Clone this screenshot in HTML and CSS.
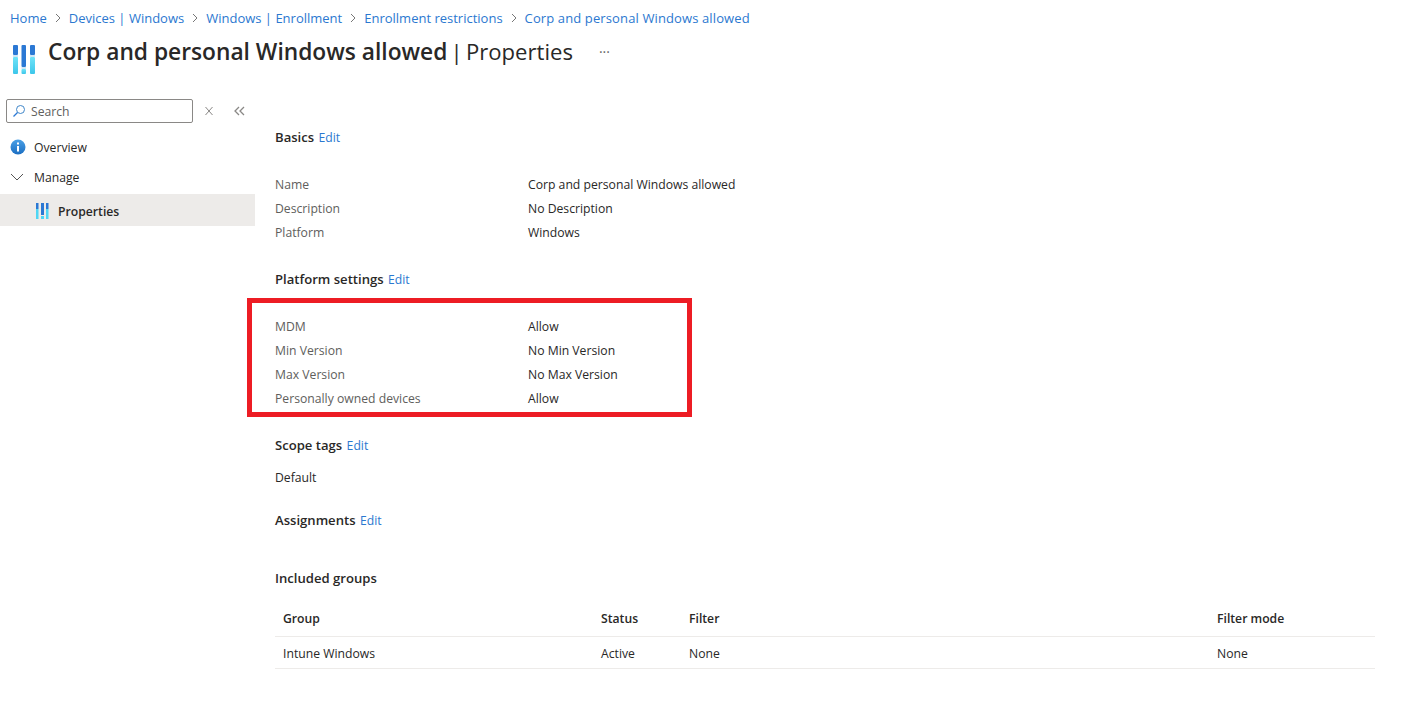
FILE: index.html
```html
<!DOCTYPE html>
<html lang="en">
<head>
    <meta charset="UTF-8">
    <meta name="viewport" content="width=device-width, initial-scale=1.0">
    <title>Corp and personal Windows allowed | Properties</title>
    <link rel="stylesheet" href="styles.css">
</head>
<body>
    <nav class="breadcrumb">
        <a href="#">Home</a>
        <svg class="crumb-sep" width="8" height="10" viewBox="0 0 8 10"><path d="M2 1l4 4-4 4" fill="none" stroke="#777" stroke-width="1"/></svg>
        <a href="#">Devices | Windows</a>
        <svg class="crumb-sep" width="8" height="10" viewBox="0 0 8 10"><path d="M2 1l4 4-4 4" fill="none" stroke="#777" stroke-width="1"/></svg>
        <a href="#">Windows | Enrollment</a>
        <svg class="crumb-sep" width="8" height="10" viewBox="0 0 8 10"><path d="M2 1l4 4-4 4" fill="none" stroke="#777" stroke-width="1"/></svg>
        <a href="#">Enrollment restrictions</a>
        <svg class="crumb-sep" width="8" height="10" viewBox="0 0 8 10"><path d="M2 1l4 4-4 4" fill="none" stroke="#777" stroke-width="1"/></svg>
        <a href="#" class="crumb-current">Corp and personal Windows allowed</a>
    </nav>

    <header class="page-title">
        <svg class="title-icon" width="22" height="29" viewBox="0 0 22 29">
            <defs>
                <linearGradient id="barLight" x1="0" y1="0" x2="0" y2="1">
                    <stop offset="0" stop-color="#6fe3f8"/>
                    <stop offset="1" stop-color="#3cc6ea"/>
                </linearGradient>
            </defs>
            <rect x="0" y="0" width="5" height="10" rx="1" fill="#2b78d4"/>
            <rect x="0" y="10" width="5" height="2" fill="#cfe6f5"/>
            <rect x="0" y="12" width="5" height="17" rx="1" fill="url(#barLight)"/>
            <rect x="8.5" y="0" width="4.5" height="22" rx="1" fill="#2b78d4"/>
            <rect x="8.5" y="22" width="4.5" height="2" fill="#cfe6f5"/>
            <rect x="8.5" y="24" width="4.5" height="5" rx="1" fill="url(#barLight)"/>
            <rect x="17" y="0" width="5" height="10" rx="1" fill="#2b78d4"/>
            <rect x="17" y="10" width="5" height="2" fill="#cfe6f5"/>
            <rect x="17" y="12" width="5" height="17" rx="1" fill="url(#barLight)"/>
        </svg>
        <h1><strong>Corp and personal Windows allowed</strong> | Properties</h1>
        <span class="title-more">···</span>
    </header>

    <div class="layout">
        <aside class="sidebar">
            <div class="search-row">
                <div class="search-box">
                    <svg width="14" height="14" viewBox="0 0 14 14"><circle cx="8.5" cy="5.5" r="4" fill="none" stroke="#3f86c9" stroke-width="1"/><path d="M5.5 8.5L1.5 12.5" stroke="#2b78d4" stroke-width="1.2"/></svg>
                    <span>Search</span>
                </div>
                <svg class="search-clear" width="10" height="10" viewBox="0 0 10 10"><path d="M1.5 1l3.5 4-3.5 4M8.5 1L5 5l3.5 4" fill="none" stroke="#8a8886" stroke-width="1"/></svg>
                <svg class="search-collapse" width="11" height="10" viewBox="0 0 11 10"><path d="M5 1L1 5l4 4M10 1L6 5l4 4" fill="none" stroke="#8a8886" stroke-width="1.3"/></svg>
            </div>
            <div class="menu-item overview">
                <svg width="16" height="16" viewBox="0 0 16 16">
                    <defs>
                        <linearGradient id="infoFill" x1="0" y1="0" x2="0" y2="1">
                            <stop offset="0" stop-color="#4aa0e6"/>
                            <stop offset="1" stop-color="#1b6ec2"/>
                        </linearGradient>
                    </defs>
                    <circle cx="8" cy="8" r="7.5" fill="url(#infoFill)"/>
                    <rect x="7" y="7" width="2" height="5.5" fill="#fff"/>
                    <rect x="7" y="3.5" width="2" height="2" fill="#fff"/>
                </svg>
                <span>Overview</span>
            </div>
            <div class="menu-item manage">
                <svg width="14" height="8" viewBox="0 0 14 8"><path d="M1 1l6 6 6-6" fill="none" stroke="#555" stroke-width="1"/></svg>
                <span>Manage</span>
            </div>
            <div class="menu-item properties">
                <svg width="13" height="16" viewBox="0 0 13 16">
                    <rect x="0" y="0" width="2.5" height="6" fill="#2b78d4"/>
                    <rect x="0" y="6" width="2.5" height="10" fill="#4fd6f4"/>
                    <rect x="5" y="0" width="3" height="12" fill="#2b78d4"/>
                    <rect x="5" y="13" width="3" height="3" fill="#4fd6f4"/>
                    <rect x="10" y="0" width="2.5" height="6" fill="#2b78d4"/>
                    <rect x="10" y="6" width="2.5" height="10" fill="#4fd6f4"/>
                </svg>
                <span>Properties</span>
            </div>
        </aside>

        <main class="content">
            <h2 class="section-head basics">Basics <a href="#">Edit</a></h2>
            <dl class="props">
                <div><dt>Name</dt><dd>Corp and personal Windows allowed</dd></div>
                <div><dt>Description</dt><dd>No Description</dd></div>
                <div><dt>Platform</dt><dd>Windows</dd></div>
            </dl>

            <h2 class="section-head">Platform settings <a href="#">Edit</a></h2>
            <dl class="props highlighted">
                <div><dt>MDM</dt><dd>Allow</dd></div>
                <div><dt>Min Version</dt><dd>No Min Version</dd></div>
                <div><dt>Max Version</dt><dd>No Max Version</dd></div>
                <div><dt>Personally owned devices</dt><dd>Allow</dd></div>
            </dl>

            <h2 class="section-head">Scope tags <a href="#">Edit</a></h2>
            <p class="tag-value">Default</p>

            <h2 class="section-head">Assignments <a href="#">Edit</a></h2>

            <h2 class="section-head included">Included groups</h2>
            <table class="groups">
                <tr>
                    <th class="col-group">Group</th>
                    <th class="col-status">Status</th>
                    <th class="col-filter">Filter</th>
                    <th>Filter mode</th>
                </tr>
                <tr>
                    <td>Intune Windows</td>
                    <td>Active</td>
                    <td>None</td>
                    <td>None</td>
                </tr>
            </table>
        </main>
    </div>
</body>
</html>
```

FILE: styles.css
```css
body {
    margin: 0;
    font-family: "Open Sans", "Noto Sans", sans-serif;
    font-size: 12.2px;
    color: #292827;
    background-color: #fff;
}
a {
    color: #2b78d0;
    text-decoration: none;
}
.breadcrumb {
    display: flex;
    align-items: center;
    gap: 7px;
    height: 18px;
    padding: 9px 0 0 10px;
    font-size: 13px;
}
.crumb-current {
    letter-spacing: 0.12px;
}
.page-title {
    display: flex;
    align-items: center;
    height: 46px;
    padding-left: 13px;
}
.title-icon {
    margin-top: 19px;
}
.page-title h1 {
    margin: 2px 0 0 13px;
    font-size: 22.1px;
    font-weight: 400;
    word-spacing: -2.5px;
}
.page-title strong {
    font-size: 22.75px;
    font-weight: 600;
    word-spacing: 0;
}
.title-more {
    margin: 2px 0 0 26px;
    color: #666;
    font-size: 14px;
}
.layout {
    display: flex;
    margin-top: 26px;
}
.sidebar {
    flex: 0 0 255px;
}
.search-row {
    display: flex;
    align-items: center;
    padding-left: 6px;
}
.search-box {
    display: flex;
    align-items: center;
    gap: 5px;
    box-sizing: border-box;
    width: 187px;
    height: 24px;
    padding-left: 5px;
    border: 1px solid #8a8886;
    border-radius: 2px;
    color: #605e5c;
}
.search-clear {
    margin-left: 11px;
}
.search-collapse {
    margin-left: 20px;
}
.menu-item {
    display: flex;
    align-items: center;
}
.overview {
    gap: 8px;
    height: 30px;
    margin-top: 9px;
    padding-left: 10px;
}
.manage {
    gap: 10px;
    height: 30px;
    padding-left: 10px;
}
.properties {
    gap: 9px;
    height: 32px;
    margin-top: 2px;
    padding-left: 36px;
    padding-top: 2px;
    box-sizing: border-box;
    background-color: #edebe9;
    font-weight: 600;
}
.content {
    flex: 1;
    padding: 0 26px 0 20px;
}
.section-head {
    margin: 0;
    font-size: 13.1px;
    line-height: 18px;
    font-weight: 600;
}
.section-head a {
    margin-left: 1px;
    font-weight: 400;
    font-size: 12.2px;
}
.basics {
    margin-top: 29px;
}
.props {
    margin: 25px 0 26px;
}
.props div {
    display: flex;
    height: 24px;
    align-items: center;
}
.props dt {
    width: 253px;
    color: #605e5c;
}
.props dd {
    margin: 0;
}
.highlighted {
    position: relative;
}
.highlighted::after {
    content: "";
    position: absolute;
    left: -28px;
    top: -16px;
    width: 435px;
    height: 109px;
    border: 5px solid #ed1c24;
}
.tag-value {
    margin: 14px 0 24px;
    line-height: 18px;
}
.included {
    margin-top: 39px;
}
.groups {
    width: 100%;
    margin-top: 13px;
    border-collapse: collapse;
    table-layout: fixed;
}
.groups th, .groups td {
    height: 31px;
    padding: 0 8px;
    border-bottom: 1px solid #edebe9;
    text-align: left;
}
.groups td {
    padding-top: 1px;
    height: 30px;
}
.groups th {
    height: 36px;
    font-weight: 600;
}
.col-group {
    width: 302px;
}
.col-status {
    width: 72px;
}
.col-filter {
    width: 512px;
}
```
